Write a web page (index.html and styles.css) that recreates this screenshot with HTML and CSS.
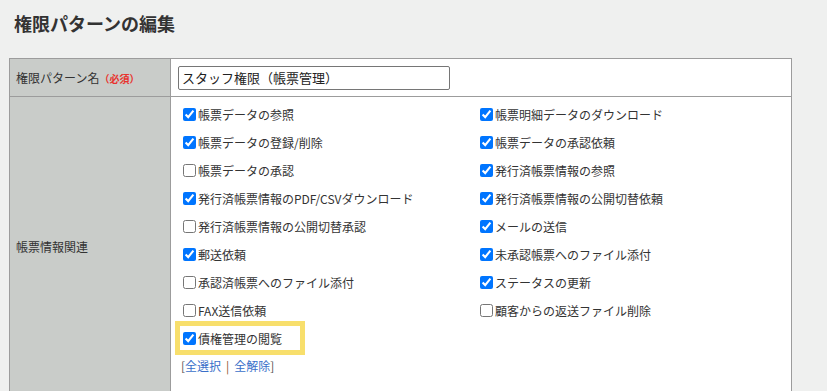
FILE: index.html
```html
<!DOCTYPE html>
<html lang="ja">
<head>
    <meta charset="UTF-8">
    <title>権限パターンの編集</title>
    <link rel="stylesheet" href="styles.css">
</head>
<body>
    <h1 class="page-title">権限パターンの編集</h1>

    <table class="form-table">
        <tr class="name-row">
            <th>権限パターン名<span class="required">（必須）</span></th>
            <td><input type="text" class="name-input" value="スタッフ権限（帳票管理）"></td>
        </tr>
        <tr class="perm-row">
            <th>帳票情報関連</th>
            <td>
                <div class="perm-grid">
                    <label class="perm"><input type="checkbox" checked>帳票データの参照</label>
                    <label class="perm"><input type="checkbox" checked>帳票明細データのダウンロード</label>
                    <label class="perm"><input type="checkbox" checked>帳票データの登録/削除</label>
                    <label class="perm"><input type="checkbox" checked>帳票データの承認依頼</label>
                    <label class="perm"><input type="checkbox">帳票データの承認</label>
                    <label class="perm"><input type="checkbox" checked>発行済帳票情報の参照</label>
                    <label class="perm"><input type="checkbox" checked>発行済帳票情報のPDF/CSVダウンロード</label>
                    <label class="perm"><input type="checkbox" checked>発行済帳票情報の公開切替依頼</label>
                    <label class="perm"><input type="checkbox">発行済帳票情報の公開切替承認</label>
                    <label class="perm"><input type="checkbox" checked>メールの送信</label>
                    <label class="perm"><input type="checkbox" checked>郵送依頼</label>
                    <label class="perm"><input type="checkbox" checked>未承認帳票へのファイル添付</label>
                    <label class="perm"><input type="checkbox">承認済帳票へのファイル添付</label>
                    <label class="perm"><input type="checkbox" checked>ステータスの更新</label>
                    <label class="perm"><input type="checkbox">FAX送信依頼</label>
                    <label class="perm"><input type="checkbox">顧客からの返送ファイル削除</label>
                    <div><label class="perm highlight"><input type="checkbox" checked>債権管理の閲覧</label></div>
                </div>
                <p class="select-links">[<a href="#">全選択</a><span class="sep">|</span><a href="#">全解除</a>]</p>
            </td>
        </tr>
    </table>
</body>
</html>
```

FILE: styles.css
```css
/* General */
body {
    margin: 0;
    background: #eff0ef;
    color: #333333;
    font-family: "Noto Sans CJK JP", "Noto Sans", sans-serif;
    font-size: 12px;
}

.page-title {
    margin: 0;
    padding: 11px 14px 0;
    height: 47px;
    font-size: 18px;
    line-height: 24px;
    font-weight: bold;
    color: #333333;
}

/* Form table */
.form-table {
    margin-left: 9px;
    width: 783px;
    border-collapse: collapse;
    table-layout: fixed;
    background: #ffffff;
}

.form-table th,
.form-table td {
    border: 1px solid #9c9c9c;
    vertical-align: middle;
}

.form-table th {
    width: 154px;
    padding: 0 0 0 6px;
    background: #c9ccc9;
    text-align: left;
    font-weight: normal;
}

.form-table td {
    padding: 0 0 0 7px;
}

.name-row {
    height: 38px;
}

.required {
    color: #e8332e;
    font-size: 10px;
    font-weight: bold;
}

.name-input {
    width: 272px;
    height: 24px;
    box-sizing: border-box;
    margin: 0;
    padding: 1px 3px;
    border: 1px solid #767676;
    border-radius: 2px;
    font-family: "Noto Sans CJK JP", sans-serif;
    font-size: 13px;
    color: #222222;
}

/* Checkbox list */
.perm-grid {
    display: grid;
    grid-template-columns: 297px 297px;
    grid-auto-rows: 28px;
    padding-top: 3px;
}

.perm {
    display: inline-flex;
    align-items: center;
    height: 28px;
    white-space: nowrap;
}

.perm input {
    width: 13px;
    height: 13px;
    margin: 0 2px 0 5px;
}

.highlight {
    width: 124px;
    outline: 5px solid #f8df6c;
    outline-offset: -2px;
}

.select-links {
    margin: 0;
    padding: 7px 0 22px 3px;
    line-height: 14px;
    color: #555555;
}

.select-links a {
    color: #3a6fc9;
    text-decoration: none;
}

.sep {
    margin: 0 5px;
    color: #8a5a2a;
}
```
